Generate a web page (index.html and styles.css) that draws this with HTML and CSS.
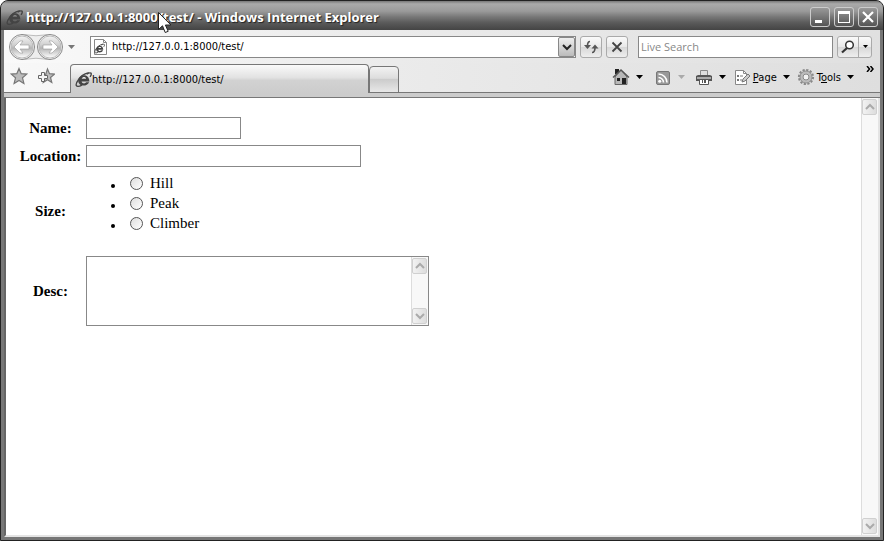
FILE: index.html
```html
<!DOCTYPE html>
<html lang="en">
<head>
    <meta charset="UTF-8">
    <meta name="viewport" content="width=device-width, initial-scale=1.0">
    <title>http://127.0.0.1:8000/test/</title>
    <link rel="stylesheet" href="styles.css">
</head>
<body>
    <svg width="0" height="0" class="symbols" aria-hidden="true">
        <symbol id="ie" viewBox="0 0 16 16">
            <path d="M13.500 9.800H6.200c.4 2.200 3.300 2.400 4.400.8h2.700c-2.200 4.800-10.600 4-10.200-1.700C3.700 2.500 13.500 2 13.500 9.800zM6.300 7.300h4.200C10.200 5.200 6.900 5.200 6.300 7.300z" fill="currentColor"/>
            <path d="M11 3C15 .5 16.500 2 14.200 5.500M3.500 8C-.5 13 .5 16.500 6.500 13.200M2.500 9.500C4.500 5.500 8.500 2.500 13 1.500" fill="none" stroke="currentColor" stroke-width="1.300"/>
        </symbol>
        <symbol id="down" viewBox="0 0 7 4"><path d="M0 0h7L3.500 4z" fill="currentColor"/></symbol>
        <symbol id="chev-up" viewBox="0 0 10 8"><path d="M1 6l4-4 4 4" fill="none" stroke="currentColor" stroke-width="2"/></symbol>
        <symbol id="chev-down" viewBox="0 0 10 8"><path d="M1 2l4 4 4-4" fill="none" stroke="currentColor" stroke-width="2"/></symbol>
    </svg>

    <div class="window">
        <header class="titlebar">
            <svg class="title-icon"><use href="#ie"/></svg>
            <h1>http://127.0.0.1:8000/test/ - Windows Internet Explorer</h1>
            <button class="win-btn" aria-label="Minimize"><svg viewBox="0 0 18 18"><path d="M4 12h7v3H4z" fill="#fff"/></svg></button>
            <button class="win-btn" aria-label="Maximize"><svg viewBox="0 0 18 18"><path d="M3 3h12v12H3zM4 6v8h10V6z" fill="#fff" fill-rule="evenodd"/></svg></button>
            <button class="win-btn" aria-label="Close"><svg viewBox="0 0 18 18"><path d="M4 4l10 10M14 4L4 14" stroke="#fff" stroke-width="2.200"/></svg></button>
            <svg class="cursor" viewBox="0 0 14 22"><path d="M.5.500v17l4-3.700 2.700 6.700 3-1.200-2.800-6.300h5.500z" fill="#fff" stroke="#222"/></svg>
        </header>

        <div class="navbar">
            <button class="history" aria-label="Back and forward">
                <svg viewBox="0 0 54 28">
                    <defs>
                        <linearGradient id="orb" x1="0" y1="0" x2="0" y2="1">
                            <stop offset="0" stop-color="#f4f4f4"/>
                            <stop offset=".4" stop-color="#d0d0d0"/>
                            <stop offset=".55" stop-color="#b4b4b4"/>
                            <stop offset="1" stop-color="#fff"/>
                        </linearGradient>
                    </defs>
                    <path d="M13 1.500Q27 4 41 1.500V26.500Q27 24 13 26.500z" fill="#eee" stroke="#bbb"/>
                    <circle cx="13" cy="14" r="12.500" fill="#f5f5f5" stroke="#888"/>
                    <circle cx="41" cy="14" r="12.500" fill="#f5f5f5" stroke="#888"/>
                    <circle cx="13" cy="14" r="11" fill="url(#orb)" stroke="#bbb"/>
                    <circle cx="41" cy="14" r="11" fill="url(#orb)" stroke="#bbb"/>
                    <path d="M5 14l6-6h3l-3 4h9v4h-9l3 4h-3z" fill="#fff" stroke="#999" stroke-width=".6"/>
                    <path d="M49 14l-6-6h-3l3 4h-9v4h9l-3 4h3z" fill="#fff" stroke="#999" stroke-width=".6"/>
                </svg>
            </button>
            <button class="arrow history-arrow" aria-label="Recent pages"><svg><use href="#down"/></svg></button>
            <div class="address">
                <svg class="page-icon" viewBox="0 0 16 18">
                    <path d="M2.500 1.500h9l3 3v12h-12z" fill="#fff" stroke="#888"/>
                    <path d="M11.500 1.500v3h3" fill="none" stroke="#888"/>
                    <use href="#ie" x="2" y="5" width="11" height="11"/>
                </svg>
                <input type="text" aria-label="Address" value="http://127.0.0.1:8000/test/">
                <button aria-label="Show addresses"><svg><use href="#chev-down"/></svg></button>
            </div>
            <button class="tool-btn" aria-label="Refresh">
                <svg viewBox="0 0 16 16"><path d="M7 2.500C5 2.500 4.500 4 4.500 7M9 13.500c2.500 0 3-2 3-5" fill="none" stroke="#555" stroke-width="1.600"/><path d="M1 6h7L4.500 10zM8.500 9.500h7L12 5.500z" fill="#555"/></svg>
            </button>
            <button class="tool-btn" aria-label="Stop">
                <svg viewBox="0 0 16 16"><path d="M3.500 3.500l9 9M12.500 3.500l-9 9" stroke="#444" stroke-width="1.800"/></svg>
            </button>
            <input class="search" type="text" aria-label="Live Search" placeholder="Live Search">
            <div class="search-btns">
                <button aria-label="Search"><svg viewBox="0 0 16 16"><circle cx="9.500" cy="6" r="3.800" fill="#fff" stroke="#333" stroke-width="1.500"/><path d="M7 9l-5 4.500" stroke="#333" stroke-width="2.200"/></svg></button>
                <button class="arrow" aria-label="Search options"><svg><use href="#down"/></svg></button>
            </div>
        </div>

        <div class="tabbar">
            <button class="fav" aria-label="Favorites">
                <svg viewBox="0 0 18 18"><path d="M9 1.500l2.200 5.200 5.600.4-4.300 3.700 1.400 5.600L9 13.400l-4.900 3 1.400-5.600L1.200 7.100l5.600-.4z" fill="#bbb" stroke="#777" stroke-width="1.200"/></svg>
            </button>
            <button class="fav" aria-label="Add to favorites">
                <svg viewBox="0 0 18 18"><path d="M10.500 2l2 4.700 5 .4-4 3.400 1.300 5-4.300-2.700-4.200 2.700 1-4z" fill="#bbb" stroke="#777" stroke-width="1.200"/><path d="M4.500 5.500h3v3h3v3h-3v3h-3v-3h-3v-3h3z" fill="#f4f4f4" stroke="#666"/></svg>
            </button>
            <a class="tab" href="#"><svg><use href="#ie"/></svg>http://127.0.0.1:8000/test/</a>
            <button class="new-tab" aria-label="New tab"></button>

            <div class="commands">
                <button class="command" aria-label="Home">
                    <svg class="icon" viewBox="0 0 18 18"><path d="M3 1h4v5H3z" fill="#222"/><path d="M3 9l6-7 6 7v7.500H3z" fill="#b8b8b8" stroke="#666"/><path d="M1 9.500L9 2l8 7.500" fill="none" stroke="#555" stroke-width="1.400"/><path d="M5 10h3v3H5zM10 10h4v6h-4z" fill="#222"/></svg>
                    <svg class="caret"><use href="#down"/></svg>
                </button>
                <button class="command feeds" aria-label="Feeds">
                    <svg class="icon" viewBox="0 0 18 18"><rect x="2.500" y="3.500" width="13" height="13" rx="1.500" fill="#999" stroke="#777"/><circle cx="5.700" cy="13.300" r="1.500" fill="#fff"/><path d="M4.500 9.500a5 5 0 0 1 5 5M4.500 6a8.500 8.500 0 0 1 8.500 8.500" fill="none" stroke="#fff" stroke-width="1.600"/></svg>
                    <svg class="caret"><use href="#down"/></svg>
                </button>
                <button class="command" aria-label="Print">
                    <svg class="icon" viewBox="0 0 18 18"><path d="M5.500 2.500h7v5h-7z" fill="#ddd" stroke="#888"/><path d="M1 8l2-1h12l2 1v5H1z" fill="#555"/><path d="M2 9h14v2H2z" fill="#aaa"/><path d="M4.500 11.500h9v5h-9z" fill="#fff" stroke="#555"/><path d="M7 12h1v3H7zM9 12h2v3H9z" fill="#555"/></svg>
                    <svg class="caret"><use href="#down"/></svg>
                </button>
                <button class="command">
                    <svg class="icon" viewBox="0 0 18 18"><path d="M2.500 2.500h8l3 3v11h-11z" fill="#fff" stroke="#888"/><path d="M10.500 2.500v3h3" fill="none" stroke="#888"/><path d="M4 7h2v2H4zM4 11h2v2H4zM7 7.500h3v1H7zM7 11.500h2v1H7z" fill="#777"/><path d="M9 14l1-3 5-5 2 2-5 5z" fill="#ccc" stroke="#777"/></svg>
                    <span><u>P</u>age</span>
                    <svg class="caret"><use href="#down"/></svg>
                </button>
                <button class="command">
                    <svg class="icon" viewBox="0 0 18 18"><circle cx="9" cy="9" r="7" fill="none" stroke="#888" stroke-width="2.200" stroke-dasharray="2.200 1.460"/><circle cx="9" cy="9" r="4.700" fill="none" stroke="#bbb" stroke-width="3"/><circle cx="9" cy="9" r="6" fill="none" stroke="#888" stroke-width=".8"/><circle cx="9" cy="9" r="3" fill="#f2f2f2" stroke="#888"/></svg>
                    <span>T<u>o</u>ols</span>
                    <svg class="caret"><use href="#down"/></svg>
                </button>
            </div>
            <button class="more" aria-label="More commands"><svg viewBox="0 0 8 6"><path d="M1 0l2.500 3L1 6M4.500 0L7 3 4.500 6" fill="none" stroke="#000" stroke-width="1.500"/></svg></button>
        </div>

        <main class="viewport">
            <form class="page">
                <table>
                    <tr>
                        <th><label for="name">Name:</label></th>
                        <td><input class="field name" type="text" id="name" name="name"></td>
                    </tr>
                    <tr>
                        <th><label for="location">Location:</label></th>
                        <td><input class="field location" type="text" id="location" name="location"></td>
                    </tr>
                    <tr>
                        <th id="size">Size:</th>
                        <td>
                            <ul role="radiogroup" aria-labelledby="size">
                                <li><label><input type="radio" name="size" value="hill">Hill</label></li>
                                <li><label><input type="radio" name="size" value="peak">Peak</label></li>
                                <li><label><input type="radio" name="size" value="climber">Climber</label></li>
                            </ul>
                        </td>
                    </tr>
                    <tr>
                        <th><label for="desc">Desc:</label></th>
                        <td>
                            <div class="desc">
                                <textarea id="desc" name="desc"></textarea>
                                <div class="scrollbar">
                                    <button type="button" aria-label="Scroll up"><svg><use href="#chev-up"/></svg></button>
                                    <button type="button" aria-label="Scroll down"><svg><use href="#chev-down"/></svg></button>
                                </div>
                            </div>
                        </td>
                    </tr>
                </table>
            </form>
            <div class="scrollbar">
                <button aria-label="Scroll page up"><svg><use href="#chev-up"/></svg></button>
                <button aria-label="Scroll page down"><svg><use href="#chev-down"/></svg></button>
            </div>
        </main>
    </div>
</body>
</html>
```

FILE: styles.css
```css
* {
    box-sizing: border-box;
}
body {
    margin: 0;
    background: #fff;
    font-family: "DejaVu Sans Condensed", "Noto Sans", sans-serif;
    font-size: 11px;
    color: #000;
}
button {
    display: flex;
    align-items: center;
    justify-content: center;
    margin: 0;
    padding: 0;
    border: none;
    background: none;
    font: inherit;
    color: inherit;
}
input,
textarea {
    margin: 0;
    font: inherit;
}
svg {
    display: block;
    flex: none;
}
.symbols {
    position: absolute;
}

/* window frame */
.window {
    display: flex;
    flex-direction: column;
    min-height: 100vh;
    border: 1px solid #222;
    border-radius: 8px 8px 0 0;
    background: #777;
    overflow: hidden;
}
.titlebar {
    position: relative;
    display: flex;
    align-items: center;
    gap: 2px;
    height: 29px;
    padding: 3px 5px 0 5px;
    background: linear-gradient(#777, #aaa 10%, #9a9a9a 35%, #777 55%, #5a5a5a 75%, #444);
    color: #fff;
}
.titlebar h1 {
    flex: 1;
    margin: 0 0 0 1px;
    font: bold 13px "Open Sans", sans-serif;
    text-shadow: 1px 1px 1px #222;
    white-space: nowrap;
}
.title-icon {
    width: 17px;
    height: 17px;
    color: #444;
}
.win-btn {
    width: 20px;
    height: 20px;
    margin-left: 2px;
    border: 1px solid #ccc;
    border-radius: 3px;
    background: linear-gradient(#999, #555);
}
.win-btn svg {
    width: 18px;
    height: 18px;
}
.cursor {
    position: absolute;
    left: 157px;
    top: 11px;
    width: 14px;
    height: 22px;
    z-index: 2;
}

/* address and search row */
.navbar {
    display: flex;
    align-items: center;
    gap: 4px;
    height: 33px;
    margin: 0 3px;
    padding: 0 8px 0 5px;
    background: linear-gradient(90deg, #fafafa, #ececec 40%, #e0e0e0);
}
.history svg {
    width: 54px;
    height: 28px;
}
.arrow svg,
.caret {
    width: 7px;
    height: 4px;
}
.history-arrow {
    margin: 0 11px 0 1px;
    color: #777;
}
.address {
    display: flex;
    flex: 1;
    height: 22px;
    border: 1px solid #888;
    background: #fff;
}
.page-icon {
    width: 16px;
    height: 18px;
    margin: 1px 2px 0 1px;
    color: #444;
}
.address input {
    flex: 1;
    min-width: 0;
    padding: 0 2px;
    border: none;
    background: none;
}
.address button {
    width: 17px;
    border: 1px solid #888;
    border-radius: 2px;
    background: linear-gradient(#eee, #bbb);
    color: #222;
}
.address button svg {
    width: 10px;
    height: 8px;
}
.tool-btn,
.search-btns {
    height: 22px;
    border: 1px solid #aaa;
    border-radius: 3px;
    background: linear-gradient(#fafafa, #e8e8e8 50%, #d8d8d8 52%, #eee);
}
.tool-btn {
    width: 22px;
}
.tool-btn svg {
    width: 16px;
    height: 16px;
}
.search {
    width: 195px;
    height: 22px;
    margin-left: 6px;
    padding: 0 2px;
    border: 1px solid #888;
    background: #fff;
    font-family: "Open Sans", sans-serif;
}
.search::placeholder {
    color: #888;
    opacity: 1;
}
.search-btns {
    display: flex;
}
.search-btns button {
    width: 20px;
}
.search-btns svg {
    width: 16px;
    height: 16px;
}
.search-btns .arrow {
    width: 13px;
    border-left: 1px solid #aaa;
}
.search-btns .arrow svg {
    width: 5px;
    height: 3px;
}

/* tabs and command bar */
.tabbar {
    display: flex;
    align-items: flex-end;
    height: 35px;
    margin: 0 3px;
    padding: 0 6px;
    border-bottom: 1px solid #777;
    background: linear-gradient(90deg, #f8f8f8, #ececec 40%, #dedede);
    box-shadow: inset 0 -4px #ccc, inset 0 -5px #777;
}
.fav {
    margin: 0 9px 12px 0;
}
.fav svg {
    width: 18px;
    height: 18px;
}
.tab {
    display: flex;
    align-items: center;
    flex: 0 1 299px;
    height: 29px;
    margin: 0 0 4px 6px;
    padding: 0 4px;
    border: 1px solid #777;
    border-bottom: none;
    border-radius: 4px 4px 0 0;
    background: linear-gradient(#fafafa, #e2e2e2 45%, #d2d2d2 55%, #ccc);
    color: #000;
    text-decoration: none;
    white-space: nowrap;
}
.tab svg {
    width: 17px;
    height: 17px;
    color: #444;
}
.new-tab {
    width: 30px;
    height: 27px;
    margin-bottom: 4px;
    border: 1px solid #777;
    border-radius: 4px 4px 0 0;
    background: linear-gradient(#f2f2f2, #ddd 45%, #ccc 50%, #e8e8e8);
}
.commands {
    display: flex;
    gap: 7px;
    margin: 0 12px 11px auto;
}
.command {
    gap: 6px;
    height: 18px;
}
.command .icon {
    width: 18px;
    height: 18px;
}
.command span {
    margin-left: -4px;
}
.feeds .caret {
    color: #aaa;
}
.feeds {
    margin: 0 3px 0 4px;
}
.more {
    margin-bottom: 25px;
}
.more svg {
    width: 8px;
    height: 6px;
}

/* browser page */
.viewport {
    display: flex;
    flex: 1;
    margin: 0 3px 3px;
    border: 2px solid #e4e4e4;
    border-width: 0 2px 2px;
    border-left-color: #666;
    background: #fff;
}
.page {
    flex: 1;
    padding: 15px 10px;
    font-family: "Liberation Serif", serif;
    font-size: 15px;
}
table {
    border-spacing: 2px;
}
th,
td {
    padding: 2px 1px;
}
th {
    width: 65px;
}
.field {
    display: block;
    height: 22px;
    border: 1px solid #888;
    background: #fff;
}
.name {
    width: 155px;
}
.location {
    width: 275px;
}
ul {
    margin: 0 0 17px;
    padding-left: 40px;
    line-height: 20px;
}
li label {
    display: flex;
    align-items: center;
}
input[type="radio"] {
    appearance: none;
    width: 13px;
    height: 13px;
    margin: 0 7px 0 4px;
    border: 1px solid #555;
    border-radius: 50%;
    background: linear-gradient(135deg, #ddd, #fff);
}
.desc {
    display: flex;
    width: 343px;
    height: 70px;
    border: 1px solid #888;
}
.desc textarea {
    flex: 1;
    border: none;
    resize: none;
    outline: none;
    background: #fff;
}
.scrollbar {
    display: flex;
    flex-direction: column;
    justify-content: space-between;
    width: 17px;
    padding: 1px 0;
    border-left: 1px solid #ddd;
    background: #f8f8f8;
}
.scrollbar button {
    width: 15px;
    height: 16px;
    border: 1px solid #d0d0d0;
    border-radius: 2px;
    background: linear-gradient(90deg, #f2f2f2, #ddd);
    color: #aaa;
}
.scrollbar svg {
    width: 10px;
    height: 8px;
}
```
